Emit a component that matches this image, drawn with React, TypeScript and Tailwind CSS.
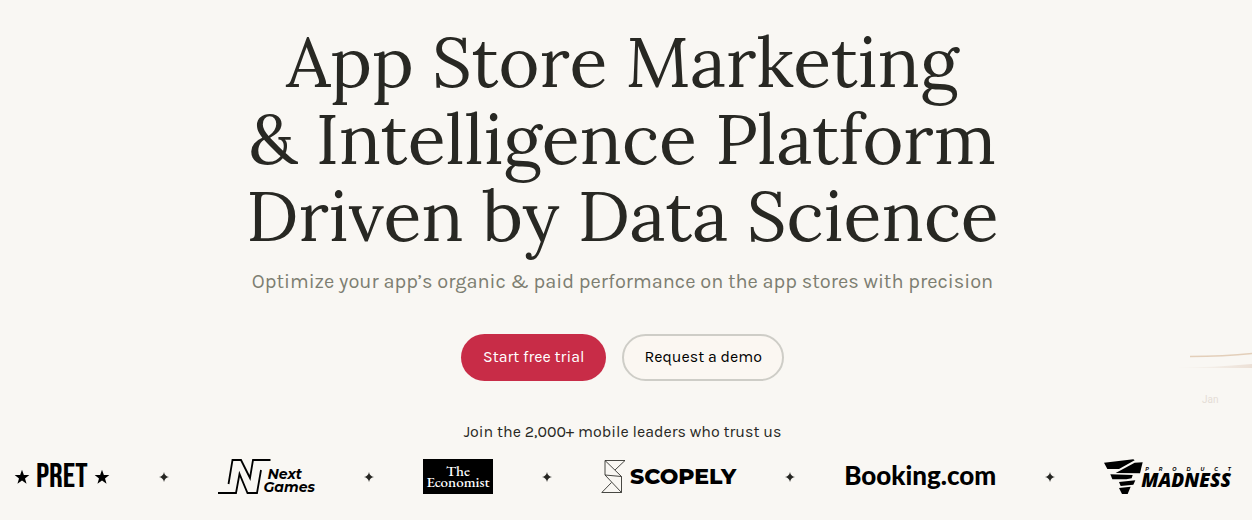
import React from 'react';

function Star() {
  return (
    <svg viewBox="0 0 24 24" className="h-4 w-4 shrink-0 fill-black" aria-hidden="true">
      <path d="M12 1l2.8 7.9 8.2.2-6.5 5 2.3 8-6.8-4.7-6.8 4.7 2.3-8-6.5-5 8.2-.2z" />
    </svg>
  );
}

function Spark() {
  return (
    <svg viewBox="0 0 10 10" className="h-2.5 w-2.5 shrink-0 fill-[#262622]" aria-hidden="true">
      <path d="M5 0Q5.6 4.2 10 5Q5.9 5.7 5 10Q4.2 5.8 0 5Q4.3 4.2 5 0z" />
    </svg>
  );
}

function PretLogo() {
  return (
    <div className="flex items-center gap-1.5">
      <Star />
      <span className="font-['Bebas_Neue','Roboto_Condensed','Roboto',sans-serif] text-[34px] leading-8">PRET</span>
      <Star />
    </div>
  );
}

function NextGamesLogo() {
  return (
    <div className="flex items-end">
      <svg viewBox="0 0 54 35" className="-mr-2 h-[35px] w-[54px]" fill="none" stroke="black" strokeWidth="1.8" aria-hidden="true">
        <path d="M10.5 25L14.5 1H23L32 19L35 1H52.5" />
        <path d="M0 34H18L21.5 15L29.5 34H39L43 11" />
      </svg>
      <span className="font-['Montserrat','Lato',sans-serif] text-sm font-bold italic leading-[13px]">
        <span className="block pl-1">Next</span>
        <span className="block">Games</span>
      </span>
    </div>
  );
}

function EconomistLogo() {
  return (
    <div className="flex h-[35px] w-[70px] flex-col items-center justify-center bg-black pb-0.5 font-['EB_Garamond','Liberation_Serif',serif] text-[15px] font-medium leading-[11px] text-white">
      <span>The</span>
      <span>Economist</span>
    </div>
  );
}

function ScopelyLogo() {
  return (
    <div className="flex items-center gap-1">
      <svg viewBox="0 0 25 35" className="h-[35px] w-[25px]" fill="none" stroke="#33332f" strokeWidth="0.9" strokeLinejoin="round" aria-hidden="true">
        <path d="M4 1.5H24L14 11" />
        <path d="M4 1.5L20.5 17.5L4 16Z" />
        <path d="M4 16L20.5 33.5V17.5" />
        <path d="M20.5 33.5H.8L10.5 23.5" />
      </svg>
      <span className="font-['Montserrat','Lato',sans-serif] text-[22px] font-extrabold leading-8">SCOPELY</span>
    </div>
  );
}

function BookingLogo() {
  return <span className="block pb-1 font-['Lato',sans-serif] text-[26px] font-black leading-8">Booking.com</span>;
}

function ProductMadnessLogo() {
  return (
    <div className="flex items-center">
      <svg viewBox="45 26 117 105" className="h-[35px] w-[39px] fill-black" aria-hidden="true">
        <path d="M45 37L133 27L137 30L90 56H55Z" />
        <path d="M137 37L161 36L153 69L80 68Z" />
        <path d="M64 72L131 74L128 84L112 87H70Z" />
        <path d="M90 95L139 90L133 103L95 107Z" />
        <path d="M90 113L125 109L116 131H99Z" />
      </svg>
      <div className="-ml-0.5 italic">
        <div className="flex justify-between pl-1 font-['Montserrat','Roboto',sans-serif] text-[5px] font-bold leading-[6px]">
          {'PRODUCT'.split('').map((letter, i) => (
            <span key={i}>{letter}</span>
          ))}
        </div>
        <div className="font-['Open_Sans',sans-serif] text-[19px] font-extrabold leading-4">MADNESS</div>
      </div>
    </div>
  );
}

const logos = [
  { name: 'Pret', Logo: PretLogo },
  { name: 'Next Games', Logo: NextGamesLogo },
  { name: 'The Economist', Logo: EconomistLogo },
  { name: 'Scopely', Logo: ScopelyLogo },
  { name: 'Booking.com', Logo: BookingLogo },
  { name: 'Product Madness', Logo: ProductMadnessLogo },
];

function ChartEdge() {
  return (
    <div className="pointer-events-none absolute right-0 top-[350px] w-20 overflow-hidden" aria-hidden="true">
      <svg viewBox="0 0 80 20" className="block h-5 w-20">
        <defs>
          <linearGradient id="area" x1="0" x2="1">
            <stop offset="0" stopColor="#ece3da" stopOpacity="0" />
            <stop offset="1" stopColor="#ece0d6" />
          </linearGradient>
        </defs>
        <path d="M4 17.5Q40 17.5 80 14V18H4Z" fill="url(#area)" />
        <path d="M18 6.5Q52 6.5 80 3.5" fill="none" stroke="#e3cfba" strokeWidth="1.3" />
      </svg>
      <span className="mt-6 block pl-[30px] font-['Roboto',sans-serif] text-[10px] leading-3 text-[#e5ddd6]">Jan</span>
    </div>
  );
}

export default function App() {
  return (
    <main className="relative min-h-screen overflow-hidden bg-[#f9f7f3] pr-[7px] font-['Karla','Roboto',sans-serif] text-[#282823]">
      <ChartEdge />
      <section className="flex flex-col items-center pt-[23px] text-center">
        <h1 className="font-['Lora','Liberation_Serif',serif] text-[70px] leading-[77px]">
          App Store Marketing
          <br />
          &amp; Intelligence Platform
          <br />
          Driven by Data Science
        </h1>
        <p className="mt-3.5 text-xl leading-7 text-[#7d7e71]">
          Optimize your app’s organic &amp; paid performance on the app stores with precision
        </p>
        <div className="mt-[38px] flex gap-4 text-base">
          <button type="button" className="rounded-full bg-[#c82c47] px-[22px] pb-3 pt-[11px] text-white">
            Start free trial
          </button>
          <button type="button" className="rounded-full border-2 border-[#cecdc7] bg-[#fbf7f2] px-5 pb-2.5 pt-[9px] text-black">
            Request a demo
          </button>
        </div>
        <p className="mt-[39px] text-base leading-6">Join the 2,000+ mobile leaders who trust us</p>
      </section>
      <ul className="mt-[15px] flex h-[35px] items-center justify-between px-3.5 text-black">
        {logos.map(({ name, Logo }, i) => (
          <React.Fragment key={name}>
            {i > 0 && <li><Spark /></li>}
            <li>
              <Logo />
            </li>
          </React.Fragment>
        ))}
      </ul>
    </main>
  );
}
